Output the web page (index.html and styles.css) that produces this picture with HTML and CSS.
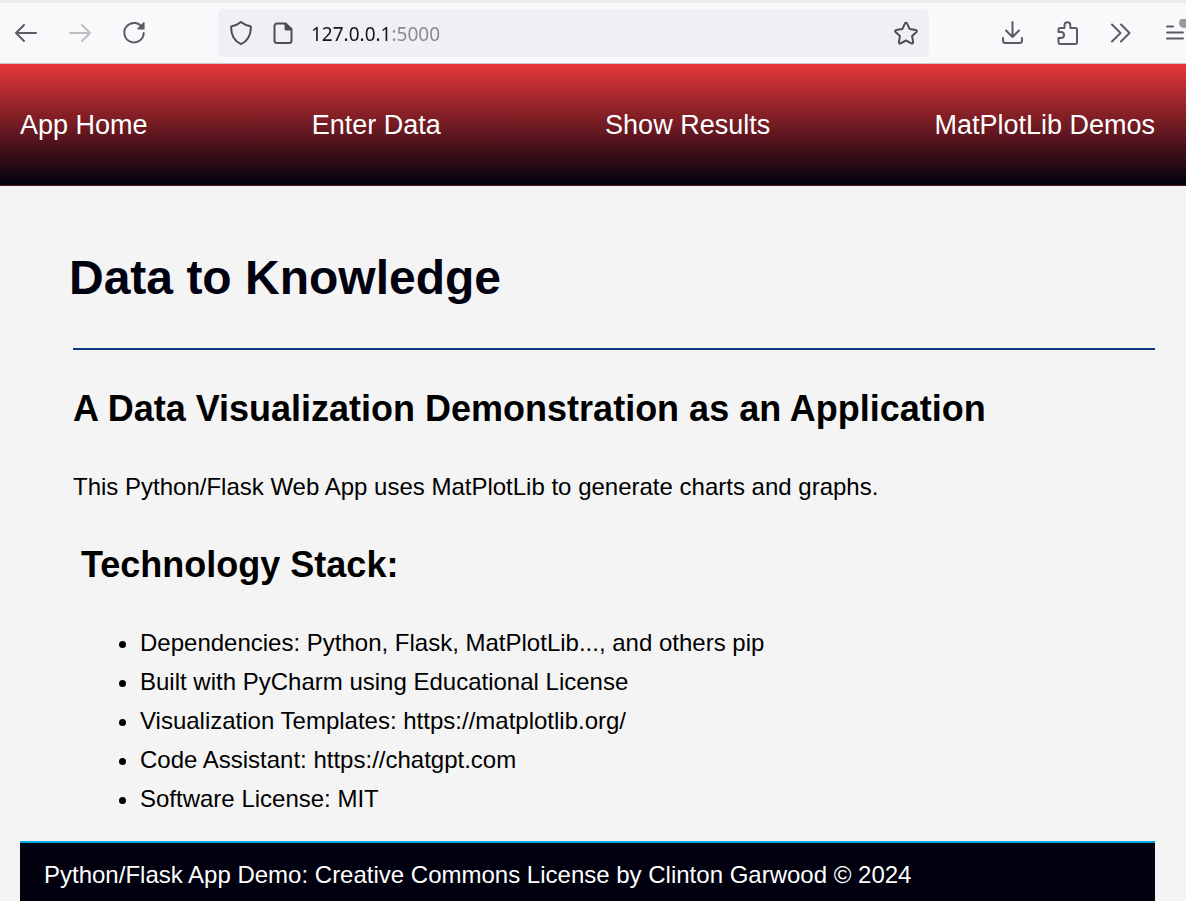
FILE: index.html
```html
<!DOCTYPE html>
<html lang="en">
<head>
<meta charset="utf-8">
<meta name="viewport" content="width=device-width, initial-scale=1">
<title>Data to Knowledge</title>
<link rel="stylesheet" href="styles.css">
</head>
<body>
<div class="toolbar">
  <div class="nav-buttons">
    <button class="tool" type="button" aria-label="Back">
      <svg viewBox="0 0 28 28"><path d="M24 14H4M12 6l-8 8 8 8"/></svg>
    </button>
    <button class="tool" type="button" aria-label="Forward" disabled>
      <svg viewBox="0 0 28 28"><path d="M4 14h20M16 6l8 8-8 8"/></svg>
    </button>
    <button class="tool" type="button" aria-label="Reload">
      <svg viewBox="0 0 28 28"><path d="M22.600 9.200A9.700 9.700 0 1 0 23.700 14"/><path class="solid" d="M24.600 3.800v6.700H18c-.8 0-1-.7-.5-1.200l5.800-5.900c.5-.5 1.300-.3 1.300.4z"/></svg>
    </button>
  </div>
  <div class="url-bar">
    <button class="tool dark" type="button" aria-label="Tracking protection">
      <svg viewBox="0 0 28 28"><path d="M14 3c-2.500 2-6 3.700-9.300 4.300-.4.100-.6.500-.6.900.1 7 2.100 13.500 9.900 17 7.800-3.500 9.800-10 9.900-17 0-.4-.2-.8-.6-.9C20 6.700 16.500 5 14 3z"/></svg>
    </button>
    <button class="tool dark" type="button" aria-label="Site information">
      <svg viewBox="0 0 28 28"><path d="M16.500 4.500H8A2.500 2.500 0 0 0 5.500 7v14.500A2.500 2.500 0 0 0 8 24h12a2.500 2.500 0 0 0 2.500-2.500V10z"/><path class="solid" d="M15.500 4h1.800l5.700 5.700v1.800h-6a1.500 1.500 0 0 1-1.500-1.500z"/></svg>
    </button>
    <input class="url" type="text" value="127.0.0.1:5000" aria-label="Address" spellcheck="false">
    <button class="tool dark" type="button" aria-label="Bookmark this page">
      <svg viewBox="0 0 28 28"><path d="M13 4.400c.4-.9 1.600-.9 2 0l2.700 5.700 6.100.9c1 .1 1.400 1.300.7 2l-4.400 4.100 1 6.100c.2 1-.8 1.700-1.700 1.200L14 21.500l-5.400 2.900c-.9.500-1.900-.2-1.700-1.200l1-6.100L3.500 13c-.7-.7-.3-1.900.7-2l6.100-.9z"/></svg>
    </button>
  </div>
  <div class="actions">
    <button class="tool" type="button" aria-label="Downloads">
      <svg viewBox="0 0 28 28"><path d="M13.500 3v14.500M7 11.500l6.500 6.500 6.500-6.500M4 19v2.500A2.500 2.500 0 0 0 6.500 24h14a2.500 2.500 0 0 0 2.500-2.500V19"/></svg>
    </button>
    <button class="tool" type="button" aria-label="Extensions">
      <svg viewBox="0 0 28 28"><path d="M5.500 13v-2.500A1.500 1.500 0 0 1 7 9h4.500V6.200a2.900 2.900 0 0 1 5.800 0V9h5.200a1.500 1.500 0 0 1 1.500 1.500v13a1.500 1.500 0 0 1-1.500 1.500H7a1.500 1.500 0 0 1-1.500-1.500V19H8a3 3 0 0 0 0-6z"/></svg>
    </button>
    <button class="tool" type="button" aria-label="More tools">
      <svg viewBox="0 0 28 28"><path d="M5 5.500l8.500 8.500L5 22.500M14 5.500l8.500 8.500-8.500 8.500"/></svg>
    </button>
  </div>
  <button class="tool menu" type="button" aria-label="Open application menu">
    <svg viewBox="0 0 22 28"><path d="M3 7.500h6M3 13.500h16M3 19.500h16"/><circle class="status" cx="20" cy="4" r="5"/></svg>
  </button>
</div>
<header class="site-header">
  <nav class="site-nav">
    <a href="#home">App Home</a>
    <a href="#enter">Enter Data</a>
    <a href="#results">Show Results</a>
    <a href="#demos">MatPlotLib Demos</a>
  </nav>
</header>
<main class="content">
  <h1 class="title">Data to Knowledge</h1>
  <section class="intro">
    <h2 class="heading">A Data Visualization Demonstration as an Application</h2>
    <p class="text">This Python/Flask Web App uses MatPlotLib to generate charts and graphs.</p>
    <h2 class="heading stack-heading">Technology Stack:</h2>
    <ul class="stack">
      <li>Dependencies: Python, Flask, MatPlotLib..., and others pip</li>
      <li>Built with PyCharm using Educational License</li>
      <li>Visualization Templates: https://matplotlib.org/</li>
      <li>Code Assistant: https://chatgpt.com</li>
      <li>Software License: MIT</li>
    </ul>
  </section>
</main>
<footer class="site-footer">Python/Flask App Demo: Creative Commons License by Clinton Garwood © 2024</footer>
</body>
</html>
```
FILE: styles.css
```css
* { box-sizing: border-box; }

body {
  margin: 0;
  min-height: 100vh;
  display: flex;
  flex-direction: column;
  background: #f4f4f4;
  color: #000;
  font: 24px/39px "Liberation Sans", Arial, sans-serif;
}

.toolbar {
  display: flex;
  align-items: center;
  padding: 6px 0 6px 12px;
  background: #f9f9fb;
  border-top: 3px solid #ebebed;
  border-bottom: 1px solid #c8c8cc;
  overflow: hidden;
}

.nav-buttons { display: flex; gap: 26px; }

.tool {
  flex: none;
  width: 28px;
  height: 28px;
  padding: 0;
  border: 0;
  background: none;
  color: #5b5b66;
}

.tool:disabled { color: #bdbdc2; }
.dark { color: #4c4c52; }

.tool svg {
  display: block;
  width: 100%;
  height: 100%;
  fill: none;
  stroke: currentColor;
  stroke-width: 2;
  stroke-linecap: round;
  stroke-linejoin: round;
}

.tool .solid { fill: currentColor; stroke: none; }
.tool .status { fill: #999; stroke: none; }

.url-bar {
  flex: 1;
  min-width: 0;
  height: 48px;
  margin-left: 70px;
  padding: 0 9px;
  display: flex;
  align-items: center;
  gap: 14px;
  border-radius: 6px;
  background: #f0f0f4;
}

.url {
  flex: 1;
  min-width: 0;
  height: 34px;
  padding: 2px 0 0;
  border: 0;
  background: linear-gradient(90deg, #15141a 79px, #88888d 79px);
  background-clip: text;
  -webkit-background-clip: text;
  color: transparent;
  font: 19px/32px "Noto Sans", "Open Sans", sans-serif;
}

.actions { display: flex; gap: 26px; margin-left: 70px; }

.menu { width: 22px; margin-left: 29px; }

.site-header {
  padding: 41px 31px 40px 20px;
  border-bottom: 1px solid #5e0f24;
  background: linear-gradient(#e63737, #00000f);
}

.site-nav {
  display: flex;
  justify-content: space-between;
}

.site-nav a {
  color: #fff;
  font-size: 27px;
  line-height: 40px;
  text-decoration: none;
}

.content { padding: 64px 31px 23px 69px; }

.title {
  margin: 0 0 42px;
  font-size: 48px;
  line-height: 56px;
  color: #00000f;
}

.intro {
  margin-left: 4px;
  padding-top: 39px;
  border-top: 2px solid #0e3a7a;
}

.heading {
  margin: 0 0 38px;
  font-size: 36px;
  line-height: 40px;
}

.text { margin: 0 0 39px; }
.stack-heading { padding-left: 8px; }

.stack {
  margin: 0;
  padding-left: 67px;
}

.site-footer {
  flex: 1;
  margin: 0 31px 0 20px;
  padding: 12px 24px 6px;
  border-top: 2px solid #00a8e8;
  background: #00000f;
  color: #fff;
}
```
